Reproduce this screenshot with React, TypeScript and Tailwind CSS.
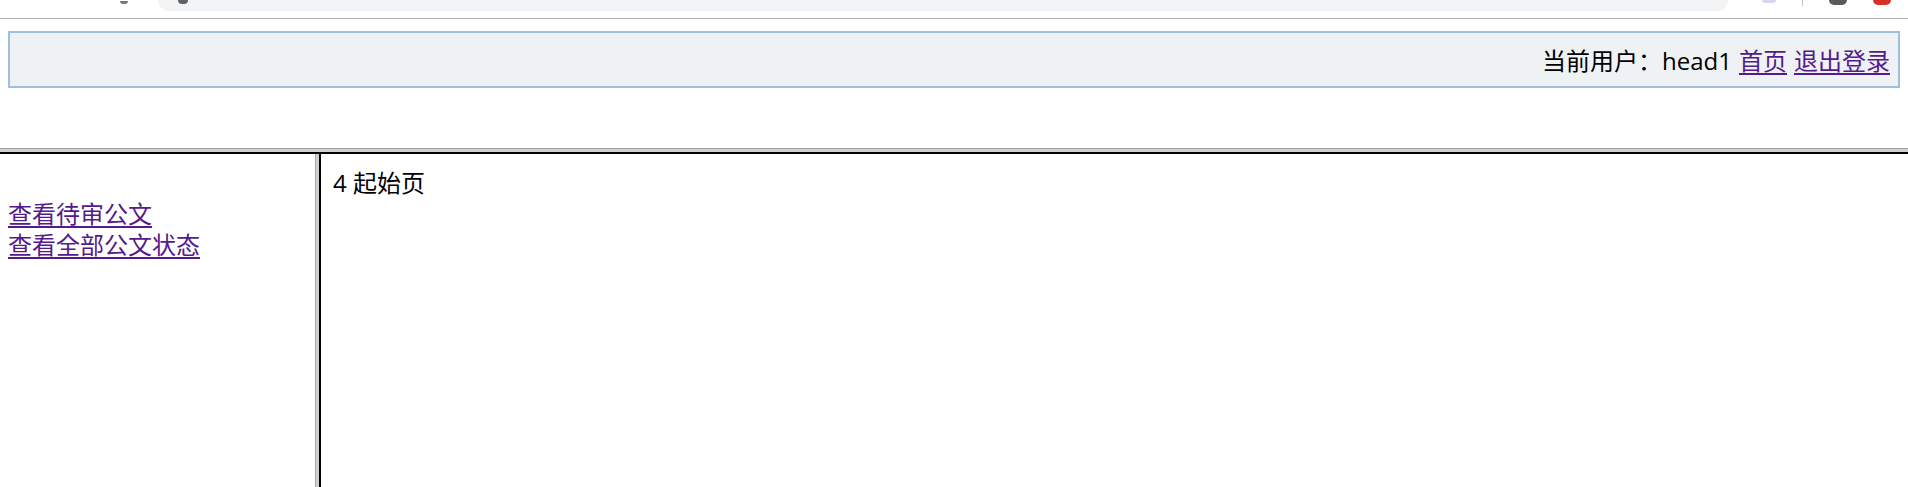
import React from "react";

const font = "font-['Open_Sans','Noto_Sans_CJK_SC',sans-serif]";

const App = () => {
  return (
    <div className={`w-full h-[487px] overflow-hidden bg-white flex flex-col ${font}`}>
      {/* browser toolbar sliver */}
      <div className="h-[19px] shrink-0 border-b border-[#aab3ba] flex items-start bg-white">
        <div className="w-[158px] flex justify-end pr-[30px]">
          <div className="w-[8px] h-[3px] mt-[1px] rounded-b-full bg-[#7a7a7a]"></div>
        </div>
        <div className="w-[1570px] h-[11px] bg-[#f1f3f4] rounded-bl-[14px] rounded-br-[14px] flex items-start pl-[20px]">
          <div className="w-[10px] h-[4px] rounded-b-full bg-[#5f6368]"></div>
        </div>
        <div className="flex-1 flex items-start gap-[26px] pl-[34px]">
          <div className="w-[14px] h-[3px] bg-[#d9d4f5] rounded-b-sm"></div>
          <div className="w-[1px] h-[6px] bg-[#c4c4c4]"></div>
          <div className="w-[18px] h-[5px] rounded-b-full bg-[#5a5a5a]"></div>
          <div className="w-[18px] h-[5px] rounded-b-full bg-[#d93025]"></div>
        </div>
      </div>

      {/* top page */}
      <div className="h-[129px] shrink-0 px-2 pt-[12px]">
        <div className="h-[57px] border-2 border-[#9fc0dc] bg-[#eef2f5] flex items-center justify-end pr-[8px] pt-[3px] text-[24px] leading-[32px] text-black">
          <span>当前用户：head1</span>
          <a href="#" className="ml-[7px] text-[#551a8b] underline underline-offset-[3px]">
            首页
          </a>
          <a href="#" className="ml-[7px] text-[#551a8b] underline underline-offset-[3px]">
            退出登录
          </a>
        </div>
      </div>

      {/* horizontal frame border */}
      <div className="h-[6px] shrink-0 border-t border-[#a0a0a0] bg-[#d0d0d0] border-b-2 border-b-black"></div>

      <div className="flex-1 flex">
        {/* left frame */}
        <div className="w-[315px] shrink-0 pl-2 pt-[44px] text-[24px] leading-[31px] flex flex-col items-start">
          <a href="#" className="text-[#551a8b] underline underline-offset-[3px]">
            查看待审公文
          </a>
          <a href="#" className="text-[#551a8b] underline underline-offset-[3px]">
            查看全部公文状态
          </a>
        </div>

        {/* vertical frame border */}
        <div className="w-[6px] shrink-0 border-l border-[#a8a8a8] bg-[#d0d0d0] border-r-2 border-r-black"></div>

        {/* main frame */}
        <div className="flex-1 pl-[12px] pt-[13px] text-[24px] leading-[32px] text-black">
          4 起始页
        </div>
      </div>
    </div>
  );
};

export default App;
